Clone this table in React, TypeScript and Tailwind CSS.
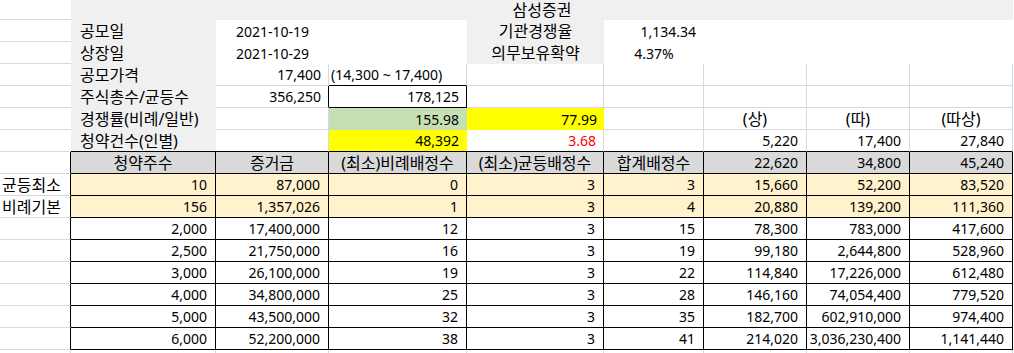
import React from 'react';

// 공모주 청약 계산 시트 (엑셀 화면 재현)

const GRID = 'border-[#d5d9e3]';

interface CellProps {
  children?: React.ReactNode;
  className?: string;
}

const Cell: React.FC<CellProps> = ({ children, className = '' }) => (
  <div className={`flex items-center overflow-visible whitespace-nowrap ${className}`}>{children}</div>
);

// 표 본문 (청약주수 ~ 따상)
const rows: string[][] = [
  ['2,000', '17,400,000', '12', '3', '15', '78,300', '783,000', '417,600'],
  ['2,500', '21,750,000', '16', '3', '19', '99,180', '2,644,800', '528,960'],
  ['3,000', '26,100,000', '19', '3', '22', '114,840', '17,226,000', '612,480'],
  ['4,000', '34,800,000', '25', '3', '28', '146,160', '74,054,400', '779,520'],
  ['5,000', '43,500,000', '32', '3', '35', '182,700', '602,910,000', '974,400'],
  ['6,000', '52,200,000', '38', '3', '41', '214,020', '3,036,230,400', '1,141,440'],
];

const highlighted: { label: string; values: string[] }[] = [
  { label: '균등최소', values: ['10', '87,000', '0', '3', '3', '15,660', '52,200', '83,520'] },
  { label: '비례기본', values: ['156', '1,357,026', '1', '3', '4', '20,880', '139,200', '111,360'] },
];

const headers = ['청약주수', '증거금', '(최소)비례배정수', '(최소)균등배정수', '합계배정수'];

export default function App() {
  return (
    <div
      className="w-[1014px] h-[353px] overflow-hidden bg-white text-black text-[14px]"
      style={{ fontFamily: '"Noto Sans", "Noto Sans CJK KR", sans-serif' }}
    >
      <div className="grid grid-cols-[71px_145px_113px_138px_137px_100px_103px_103px_103px] grid-rows-[20px_repeat(16,22px)]">
        {/* row 1 */}
        <Cell className={`border-b ${GRID}`} />
        <Cell className="col-span-8 justify-center bg-[#f0f0f0] pb-[1px] text-[16px] leading-[18px]">삼성증권</Cell>

        {/* row 2 */}
        <Cell className={`border-b ${GRID}`} />
        <Cell className="bg-[#f0f0f0] pl-[9px] text-[16px]">공모일</Cell>
        <Cell className="justify-center">2021-10-19</Cell>
        <Cell />
        <Cell className="justify-center bg-[#f0f0f0] text-[16px]">기관경쟁율</Cell>
        <Cell className="justify-end pr-[8px]">1,134.34</Cell>
        <Cell />
        <Cell />
        <Cell />

        {/* row 3 */}
        <Cell className={`border-b ${GRID}`} />
        <Cell className="bg-[#f0f0f0] pl-[9px] text-[16px]">상장일</Cell>
        <Cell className="justify-center">2021-10-29</Cell>
        <Cell />
        <Cell className="justify-center bg-[#f0f0f0] text-[16px]">의무보유확약</Cell>
        <Cell className="justify-center">4.37%</Cell>
        <Cell />
        <Cell />
        <Cell />

        {/* row 4 */}
        <Cell className={`border-b ${GRID}`} />
        <Cell className="bg-[#f0f0f0] pl-[9px] text-[16px]">공모가격</Cell>
        <Cell className={`justify-end pr-[7px] border-r border-b ${GRID}`}>17,400</Cell>
        <Cell className="pl-[2px] border-r border-r-[#d5d9e3] border-b border-b-black">(14,300 ~ 17,400)</Cell>
        <Cell className={`border-r border-b ${GRID}`} />
        <Cell className={`border-r border-b ${GRID}`} />
        <Cell className={`border-r border-b ${GRID}`} />
        <Cell className={`border-r border-b ${GRID}`} />
        <Cell className={`border-r border-b ${GRID}`} />

        {/* row 5 */}
        <Cell className={`border-b ${GRID}`} />
        <Cell className="bg-[#f0f0f0] pl-[9px] text-[16px]">주식총수/균등수</Cell>
        <Cell className="justify-end pr-[7px] border-r border-r-black border-b border-b-[#d5d9e3]">356,250</Cell>
        <Cell className="justify-end pr-[7px] border-r border-b border-black">178,125</Cell>
        <Cell className={`border-r border-b ${GRID}`} />
        <Cell className={`border-r border-b ${GRID}`} />
        <Cell className={`border-r border-b ${GRID}`} />
        <Cell className={`border-r border-b ${GRID}`} />
        <Cell className={`border-r border-b ${GRID}`} />

        {/* row 6 */}
        <Cell className={`border-b ${GRID}`} />
        <Cell className="bg-[#f0f0f0] pl-[9px] text-[16px]">경쟁률(비례/일반)</Cell>
        <Cell className={`border-r border-b ${GRID}`} />
        <Cell className="justify-end pr-[8px] bg-[#c6e0b4]">155.98</Cell>
        <Cell className="justify-end pr-[7px] bg-[#ffff00]">77.99</Cell>
        <Cell className={`border-r border-b ${GRID}`} />
        <Cell className={`justify-center text-[16px] border-r border-b ${GRID}`}>(상)</Cell>
        <Cell className={`justify-center text-[16px] border-r border-b ${GRID}`}>(따)</Cell>
        <Cell className={`justify-center text-[16px] border-r border-b ${GRID}`}>(따상)</Cell>

        {/* row 7 */}
        <Cell className={`border-b ${GRID}`} />
        <Cell className="bg-[#f0f0f0] pl-[9px] text-[16px] border-b border-black">청약건수(인별)</Cell>
        <Cell className="border-r border-r-[#d5d9e3] border-b border-b-black" />
        <Cell className="justify-end pr-[8px] bg-[#ffff00] border-b border-black">48,392</Cell>
        <Cell className="justify-end pr-[7px] text-[#ff0000] border-r border-r-[#d5d9e3] border-b border-b-black">3.68</Cell>
        <Cell className="border-r border-r-[#d5d9e3] border-b border-b-black" />
        <Cell className="justify-end pr-[8px] border-r border-r-[#d5d9e3] border-b border-b-black">5,220</Cell>
        <Cell className="justify-end pr-[8px] border-r border-r-[#d5d9e3] border-b border-b-black">17,400</Cell>
        <Cell className="justify-end pr-[8px] border-r border-r-[#d5d9e3] border-b border-b-black">27,840</Cell>

        {/* row 8: header */}
        <Cell className="border-r border-r-black border-b border-b-[#d5d9e3]" />
        {headers.map((h) => (
          <Cell key={h} className="justify-center text-[16px] bg-[#d9d9d9] border-r border-b border-black">
            {h}
          </Cell>
        ))}
        <Cell className="justify-end pr-[8px] bg-[#d9d9d9] border-r border-b border-black">22,620</Cell>
        <Cell className="justify-end pr-[8px] bg-[#d9d9d9] border-r border-b border-black">34,800</Cell>
        <Cell className="justify-end pr-[8px] bg-[#d9d9d9] border-r border-b border-black">45,240</Cell>

        {/* rows 9-10: highlighted */}
        {highlighted.map((row) => (
          <React.Fragment key={row.label}>
            <Cell className="pl-[2px] text-[16px] border-r border-r-black border-b border-b-[#d5d9e3]">{row.label}</Cell>
            {row.values.map((v, i) => (
              <Cell key={i} className="justify-end pr-[8px] bg-[#fff2cc] border-r border-b border-black">
                {v}
              </Cell>
            ))}
          </React.Fragment>
        ))}

        {/* rows 11-16 */}
        {rows.map((row, r) => (
          <React.Fragment key={r}>
            <Cell className="border-r border-r-black border-b border-b-[#d5d9e3]" />
            {row.map((v, i) => (
              <Cell key={i} className="justify-end pr-[8px] border-r border-b border-black">
                {v}
              </Cell>
            ))}
          </React.Fragment>
        ))}

        {/* row 17 (partial) */}
        {Array.from({ length: 9 }).map((_, i) => (
          <Cell key={i} className={`border-r ${GRID}`} />
        ))}
      </div>
    </div>
  );
}
